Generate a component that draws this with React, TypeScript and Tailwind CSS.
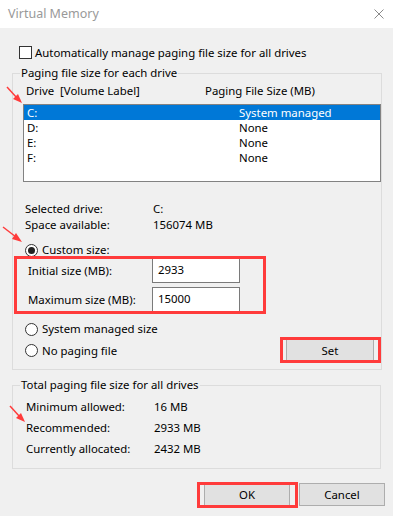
import React from "react";

function Radio({ checked }: { checked?: boolean }) {
  return (
    <span className="w-[13px] h-[13px] rounded-full border border-[#333] bg-white flex items-center justify-center shrink-0">
      {checked && <span className="w-[7px] h-[7px] rounded-full bg-[#222]" />}
    </span>
  );
}

function Btn({ label, w }: { label: string; w: string }) {
  return (
    <div className={`${w} h-[23px] bg-[#e1e1e1] border border-[#adadad] flex items-center justify-center`}>
      {label}
    </div>
  );
}

export default function App() {
  const rows = [
    { d: "C:", v: "System managed", sel: true },
    { d: "D:", v: "None" },
    { d: "E:", v: "None" },
    { d: "F:", v: "None" },
  ];
  return (
    <div className="w-[393px] h-[516px] bg-[#f0f0f0] relative overflow-hidden text-[11.4px] leading-[16px] text-black font-['Noto_Sans',sans-serif]">
      {/* title bar */}
      <div className="h-[28px] bg-white flex items-center justify-between pl-[8px] pr-[9px]">
        <span className="text-[12.5px] text-[#999]">Virtual Memory</span>
        <svg width="10" height="10" viewBox="0 0 10 10">
          <path d="M0.5 0.5 L9.5 9.5 M9.5 0.5 L0.5 9.5" stroke="#8a8a8a" strokeWidth="1" />
        </svg>
      </div>

      <div className="pl-[12px] pr-[12px]">
        {/* checkbox */}
        <div className="mt-[18px] pl-[7px] flex items-center h-[13px] gap-[3px]">
          <span className="w-[13px] h-[13px] border border-[#333] bg-white shrink-0" />
          <span>Automatically manage paging file size for all drives</span>
        </div>

        {/* group 1 */}
        <fieldset className="mt-[6px] border border-[#dcdcdc] pb-[7px]">
          <legend className="ml-[7px] px-[1px] leading-[16px]">Paging file size for each drive</legend>
          <div className="pl-[10px]">
            <div className="mt-[2px] flex pl-[3px]">
              <span className="w-[179px] whitespace-pre">Drive  [Volume Label]</span>
              <span>Paging File Size (MB)</span>
            </div>
            <div className="mt-[5px] w-[358px] h-[78px] border border-[#828282] bg-white">
              {rows.map((r) => (
                <div
                  key={r.d}
                  className={`h-[15px] flex items-center leading-[14px] pl-[3px] ${r.sel ? "bg-[#0078d7] text-white" : ""}`}
                >
                  <span className="w-[212px]">{r.d}</span>
                  <span>{r.v}</span>
                </div>
              ))}
            </div>
          </div>

          <div className="pl-[12px] mt-[19px]">
            <div className="flex">
              <span className="w-[128px]">Selected drive:</span>
              <span>C:</span>
            </div>
            <div className="flex">
              <span className="w-[128px]">Space available:</span>
              <span>156074 MB</span>
            </div>
            <div className="mt-[9px] flex items-center gap-[4px] h-[16px]">
              <Radio checked />
              <span>Custom size:</span>
            </div>
          </div>

          <div className="pl-[15px]">
            <div className="flex items-center">
              <span className="w-[124px]">Initial size (MB):</span>
              <div className="w-[88px] h-[25px] border border-[#7a7a7a] bg-white pl-[5px] pt-[1px] leading-[20px]">2933</div>
            </div>
            <div className="mt-[4px] flex items-center">
              <span className="w-[124px]">Maximum size (MB):</span>
              <div className="w-[88px] h-[25px] border border-[#7a7a7a] bg-white pl-[5px] pt-[1px] leading-[20px]">15000</div>
            </div>
          </div>

          <div className="pl-[12px] pr-[7px]">
            <div className="mt-[9px] flex items-center gap-[4px] h-[16px]">
              <Radio />
              <span>System managed size</span>
            </div>
            <div className="mt-[2px] flex items-center justify-between h-[23px]">
              <div className="flex items-center gap-[4px]">
                <Radio />
                <span>No paging file</span>
              </div>
              <Btn label="Set" w="w-[88px]" />
            </div>
          </div>
        </fieldset>

        {/* group 2 */}
        <fieldset className="mt-[7px] border border-[#dcdcdc] pb-[11px]">
          <legend className="ml-[7px] px-[1px] leading-[16px]">Total paging file size for all drives</legend>
          <div className="pl-[13px] mt-[6px] flex flex-col gap-[5px]">
            <div className="flex">
              <span className="w-[128px]">Minimum allowed:</span>
              <span>16 MB</span>
            </div>
            <div className="flex">
              <span className="w-[128px]">Recommended:</span>
              <span>2933 MB</span>
            </div>
            <div className="flex">
              <span className="w-[128px]">Currently allocated:</span>
              <span>2432 MB</span>
            </div>
          </div>
        </fieldset>
      </div>

      {/* bottom buttons */}
      <div className="mt-[14px] flex justify-end gap-[9px] pr-[8px]">
        <Btn label="OK" w="w-[86px]" />
        <Btn label="Cancel" w="w-[86px]" />
      </div>

      {/* red annotations */}
      <div className="absolute left-[14px] top-[256px] w-[252px] h-[58px] border-[3px] border-[#ff3b3b] pointer-events-none" />
      <div className="absolute left-[280px] top-[337px] w-[101px] h-[26px] border-[3px] border-[#ff3b3b] pointer-events-none" />
      <div className="absolute left-[197px] top-[482px] w-[101px] h-[26px] border-[3px] border-[#ff3b3b] pointer-events-none" />
      <svg className="absolute left-0 top-0 pointer-events-none" width="393" height="516" viewBox="0 0 393 516">
        <g fill="#ff3b3b" stroke="#ff3b3b">
          <line x1="7" y1="87" x2="17" y2="98" strokeWidth="1.5" />
          <polygon points="22,103 13,99 18,94" stroke="none" />
          <line x1="3" y1="227" x2="16" y2="237" strokeWidth="1.5" />
          <polygon points="22,242 12,239 16,233" stroke="none" />
          <line x1="10" y1="406" x2="20" y2="417" strokeWidth="1.5" />
          <polygon points="25,422 16,418 21,413" stroke="none" />
        </g>
      </svg>
    </div>
  );
}
